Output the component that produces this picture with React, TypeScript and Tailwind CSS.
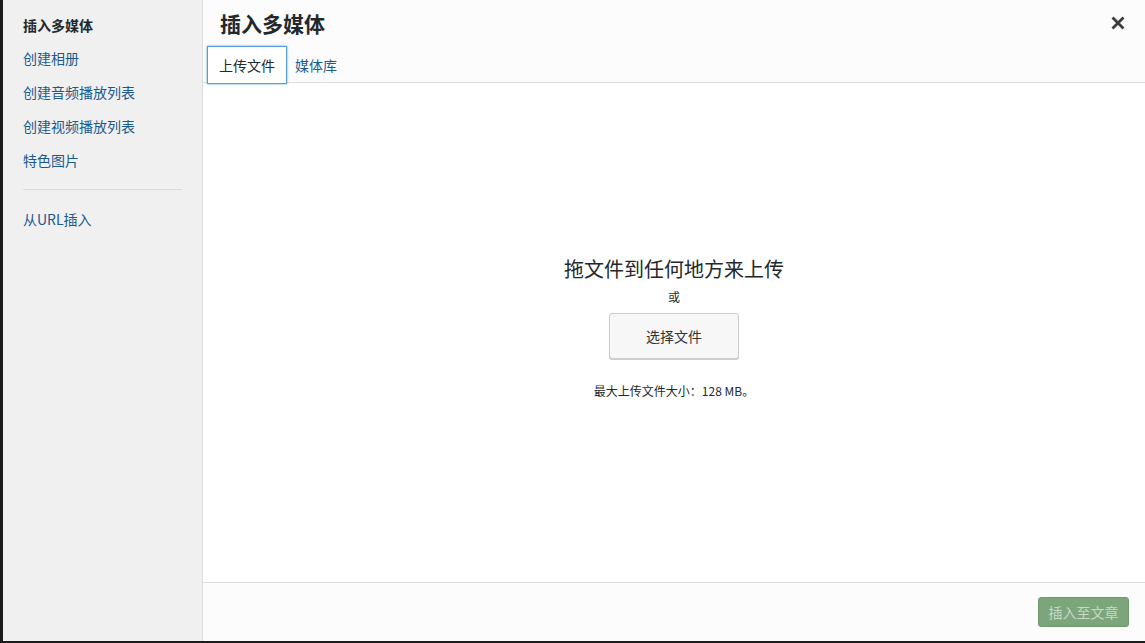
import { useState } from 'react';

const font = { fontFamily: '"Noto Sans CJK SC", "Liberation Sans", sans-serif' };

const menuItems = ['创建相册', '创建音频播放列表', '创建视频播放列表', '特色图片'];

function CloseIcon() {
  return (
    <svg width="14" height="14" viewBox="0 0 14 14" aria-hidden="true">
      <path d="M2.5 2.5 L11.5 11.5 M11.5 2.5 L2.5 11.5" stroke="#3c3c3c" strokeWidth="2.8" strokeLinecap="square" />
    </svg>
  );
}

export default function App() {
  const [tab, setTab] = useState<'upload' | 'library'>('upload');

  return (
    <div className="flex h-[643px] w-full bg-[#1b1b1b] pb-[2px] pl-[3px]" style={font}>
      {/* 侧边菜单 */}
      <aside className="flex w-[200px] shrink-0 flex-col border-r border-[#dcdcdc] bg-[#f0f0f0] pt-[14px]">
        <div className="px-[20px] text-[14px] font-semibold leading-[22px] text-[#23282d]">插入多媒体</div>
        {menuItems.map((item, i) => (
          <a
            key={item}
            href="#"
            className={(i === 0 ? 'mt-[11px]' : 'mt-[12px]') + ' px-[20px] text-[14px] leading-[22px] text-[#1a5a8f]'}
          >
            {item}
          </a>
        ))}
        <div className="mx-[20px] mt-[18px] border-t border-[#dcdcdc]" />
        <a href="#" className="mt-[18px] px-[20px] text-[14px] leading-[22px] text-[#1a5a8f]">
          从URL插入
        </a>
      </aside>

      {/* 主区域 */}
      <main className="flex min-w-0 flex-1 flex-col bg-white">
        <header className="relative h-[83px] shrink-0 border-b border-[#dddddd] bg-[#fcfcfc]">
          <h1 className="px-[17px] text-[21px] font-semibold leading-[46px] text-[#23282d]">插入多媒体</h1>
          <button className="absolute right-[20px] top-[16px] flex h-[14px] w-[14px] items-center justify-center">
            <CloseIcon />
          </button>
          <nav className="flex items-stretch pl-[4px]">
            <button
              onClick={() => setTab('upload')}
              className={
                tab === 'upload'
                  ? 'relative z-10 h-[38px] border border-[#5b9dd9] bg-white px-[11px] text-[14px] text-[#23282d] shadow-[0_0_2px_rgba(30,140,190,0.8)]'
                  : 'h-[38px] border border-transparent px-[7px] text-[14px] text-[#1a5a8f]'
              }
            >
              上传文件
            </button>
            <button
              onClick={() => setTab('library')}
              className={
                tab === 'library'
                  ? 'relative z-10 h-[38px] border border-[#5b9dd9] bg-white px-[11px] text-[14px] text-[#23282d] shadow-[0_0_2px_rgba(30,140,190,0.8)]'
                  : 'h-[38px] border border-transparent px-[7px] text-[14px] text-[#1a5a8f]'
              }
            >
              媒体库
            </button>
          </nav>
        </header>

        <section className="flex flex-1 flex-col items-center pt-[172px]">
          <p className="text-[20px] leading-[28px] text-[#23282d]">拖文件到任何地方来上传</p>
          <p className="mt-[5px] text-[12px] leading-[18px] text-[#23282d]">或</p>
          <button className="mt-[7px] h-[46px] w-[130px] rounded-[3px] border border-[#cccccc] bg-[#f7f7f7] text-[14px] text-[#333] shadow-[0_1px_0_#cccccc]">
            选择文件
          </button>
          <p className="mt-[24px] text-[12px] leading-[16px] text-[#23282d]">最大上传文件大小：128 MB。</p>
        </section>

        <footer className="flex h-[59px] shrink-0 items-center justify-end border-t border-[#dddddd] bg-[#fcfcfc] pr-[16px]">
          <button
            disabled
            className="h-[30px] w-[91px] rounded-[3px] border border-[#6f9a6e] bg-[#7da57c] text-[14px] text-[#c4dac3]"
          >
            插入至文章
          </button>
        </footer>
      </main>
    </div>
  );
}
